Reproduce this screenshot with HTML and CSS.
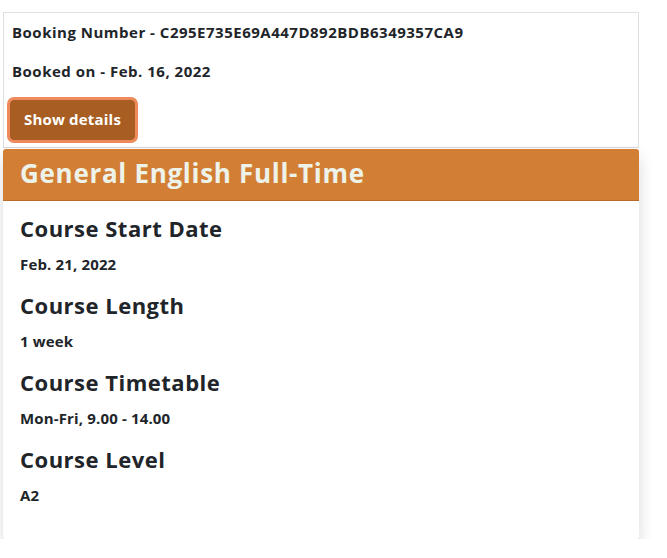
FILE: index.html
```html
<!DOCTYPE html>
<html lang="en">
<head>
<meta charset="utf-8">
<title>Booking</title>
<link rel="stylesheet" href="styles.css">
</head>
<body>
<div class="page">
  <div class="booking">
    <p class="line">Booking Number - C295E735E69A447D892BDB6349357CA9</p>
    <p class="line">Booked on - Feb. 16, 2022</p>
    <button class="btn" type="button">Show details</button>
  </div>
  <div class="card">
    <div class="card-header">General English Full-Time</div>
    <div class="card-body">
      <div class="item">
        <h5 class="item-title">Course Start Date</h5>
        <p class="item-value">Feb. 21, 2022</p>
      </div>
      <div class="item">
        <h5 class="item-title">Course Length</h5>
        <p class="item-value">1 week</p>
      </div>
      <div class="item">
        <h5 class="item-title">Course Timetable</h5>
        <p class="item-value">Mon-Fri, 9.00 - 14.00</p>
      </div>
      <div class="item">
        <h5 class="item-title">Course Level</h5>
        <p class="item-value">A2</p>
      </div>
    </div>
  </div>
</div>
</body>
</html>
```

FILE: styles.css
```css
* { box-sizing: border-box; }
html, body { margin: 0; padding: 0; background: #fff; }
body {
  font-family: "Open Sans", Lato, "Liberation Sans", sans-serif;
  color: #212529;
}
.page {
  width: 636px;
  margin: 12px 0 0 3px;
}
.booking {
  border: 1px solid #dee2e6;
  border-bottom-color: #d6d8da;
  padding: 9px 8px 7px 6px;
}
.line {
  margin: 0 0 18px 2px;
  font-size: 15px;
  line-height: 21px;
  font-weight: 700;
  letter-spacing: 0.5px;
}
.line + .line { margin-bottom: 18px; }
.btn {
  display: block;
  margin: 0;
  font-family: inherit;
  font-size: 15px;
  font-weight: 700;
  line-height: 21px;
  letter-spacing: 0.2px;
  color: #fff;
  background: #a85e22;
  border: 1px solid #a85e22;
  border-radius: 4px;
  width: 125px;
  padding: 8px 0 9px;
  text-align: center;
  box-shadow: 0 0 0 3px #ee8a5c;
}
.card {
  margin-top: 1px;
  background: #fff;
  border-radius: 3px;
  box-shadow: 0 8px 16px rgba(0, 0, 0, 0.15);
  overflow: hidden;
}
.card-header {
  background: #d27f35;
  border-bottom: 1px solid #b96c28;
  color: #eef3ea;
  font-size: 26px;
  font-weight: 700;
  line-height: 31px;
  letter-spacing: 0.7px;
  padding: 9px 17px 11px;
}
.card-body {
  padding: 14px 17px 16px;
}
.item-title {
  margin: 0 0 13px;
  font-size: 22px;
  line-height: 26px;
  font-weight: 700;
  letter-spacing: 0.5px;
}
.item-value {
  margin: 0 0 18px;
  font-size: 15px;
  line-height: 20px;
  font-weight: 700;
  letter-spacing: 0.15px;
}
```
